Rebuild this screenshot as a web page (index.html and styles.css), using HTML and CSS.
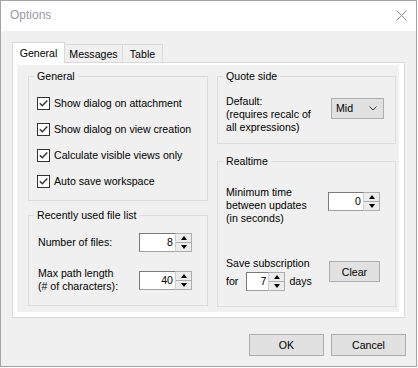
FILE: index.html
```html
<!DOCTYPE html>
<html lang="en">
<head>
  <meta charset="UTF-8">
  <title>Options</title>
  <link rel="stylesheet" href="styles.css">
</head>
<body>
  <div class="window">
    <div class="titlebar">
      <span class="title">Options</span>
      <svg class="close" width="11" height="11" viewBox="0 0 11 11">
        <path d="M0.5 0.5 L10.5 10.5 M10.5 0.5 L0.5 10.5" stroke="#8a8a8a" stroke-width="1" fill="none"/>
      </svg>
    </div>

    <div class="dialog">
      <div class="tabs">
        <div class="tab active">General</div>
        <div class="tab">Messages</div>
        <div class="tab">Table</div>
      </div>

      <div class="panel">
        <div class="page">
          <div class="col">
            <fieldset class="group">
              <legend>General</legend>
              <div class="group-body checks">
                <label class="check"><span class="box"><svg width="11" height="11" viewBox="0 0 11 11"><path d="M1.8 5.2 L4.3 7.8 L9.3 2.4" stroke="#333" stroke-width="1.4" fill="none"/></svg></span>Show dialog on attachment</label>
                <label class="check"><span class="box"><svg width="11" height="11" viewBox="0 0 11 11"><path d="M1.8 5.2 L4.3 7.8 L9.3 2.4" stroke="#333" stroke-width="1.4" fill="none"/></svg></span>Show dialog on view creation</label>
                <label class="check"><span class="box"><svg width="11" height="11" viewBox="0 0 11 11"><path d="M1.8 5.2 L4.3 7.8 L9.3 2.4" stroke="#333" stroke-width="1.4" fill="none"/></svg></span>Calculate visible views only</label>
                <label class="check"><span class="box"><svg width="11" height="11" viewBox="0 0 11 11"><path d="M1.8 5.2 L4.3 7.8 L9.3 2.4" stroke="#333" stroke-width="1.4" fill="none"/></svg></span>Auto save workspace</label>
              </div>
            </fieldset>

            <fieldset class="group recent">
              <legend>Recently used file list</legend>
              <div class="group-body files">
                <div class="field-row">
                  <span class="field-label">Number of files:</span>
                  <div class="spin">
                    <span class="spin-value">8</span>
                    <span class="spin-btns"><span class="spin-up"></span><span class="spin-down"></span></span>
                  </div>
                </div>
                <div class="field-row">
                  <span class="field-label">Max path length<br>(# of characters):</span>
                  <div class="spin">
                    <span class="spin-value">40</span>
                    <span class="spin-btns"><span class="spin-up"></span><span class="spin-down"></span></span>
                  </div>
                </div>
              </div>
            </fieldset>
          </div>

          <div class="col">
            <fieldset class="group">
              <legend>Quote side</legend>
              <div class="group-body quote">
                <span class="quote-text">Default:<br>(requires recalc of<br>all expressions)</span>
                <div class="select">
                  <span>Mid</span>
                  <svg width="8" height="5" viewBox="0 0 8 5"><path d="M0.5 0.5 L4 4 L7.5 0.5" stroke="#333" stroke-width="1" fill="none"/></svg>
                </div>
              </div>
            </fieldset>

            <fieldset class="group realtime">
              <legend>Realtime</legend>
              <div class="group-body">
                <div class="rt-row">
                  <span class="rt-text">Minimum time<br>between updates<br>(in seconds)</span>
                  <div class="spin spin-wide">
                    <span class="spin-value">0</span>
                    <span class="spin-btns"><span class="spin-up"></span><span class="spin-down"></span></span>
                  </div>
                </div>
                <div class="rt-row save">
                  <div class="save-text">
                    <span>Save subscription</span>
                    <div class="days">
                      <span>for</span>
                      <div class="spin spin-small">
                        <span class="spin-value">7</span>
                        <span class="spin-btns"><span class="spin-up"></span><span class="spin-down"></span></span>
                      </div>
                      <span>days</span>
                    </div>
                  </div>
                  <button class="btn clear">Clear</button>
                </div>
              </div>
            </fieldset>
          </div>
        </div>
      </div>

      <div class="buttons">
        <button class="btn">OK</button>
        <button class="btn">Cancel</button>
      </div>
    </div>
  </div>
</body>
</html>
```

FILE: styles.css
```css
* {
  margin: 0;
  padding: 0;
  box-sizing: border-box;
}

html, body {
  background: #fff;
}

body {
  font-family: "Liberation Sans", Arial, sans-serif;
  font-size: 10.6px;
  line-height: 13px;
  color: #000;
}

.window {
  width: 417px;
  height: 367px;
  border: 1px solid #a3a3a3;
  background: #f0f0f0;
  display: flex;
  flex-direction: column;
}

.titlebar {
  height: 30px;
  background: #fff;
  display: flex;
  align-items: center;
  justify-content: space-between;
  padding: 0 9px 1px 9px;
}

.title {
  font-size: 12px;
  color: #9a9aa2;
}

.dialog {
  flex: 1;
  padding: 11px 10px 0 11px;
}

/* tabs */
.tabs {
  display: flex;
  align-items: flex-end;
  height: 21px;
  margin-bottom: -1px;
  position: relative;
  z-index: 1;
}

.tab {
  height: 18px;
  margin-bottom: 1px;
  margin-left: -1px;
  border: 1px solid #d9d9d9;
  border-bottom: 0;
  background: #f0f0f0;
  display: flex;
  align-items: center;
  justify-content: center;
  padding-top: 1px;
}

.tab:nth-child(2) { width: 59px; }
.tab:nth-child(3) { width: 41px; }

.tab.active {
  width: 53px;
  height: 21px;
  margin: 0;
  background: #fff;
  position: relative;
  z-index: 1;
  padding-top: 0;
}

.panel {
  width: 393px;
  height: 256px;
  border: 1px solid #d9d9d9;
  background: #fff;
  padding: 2px 5px 5px 4px;
}

.page {
  height: 100%;
  background: #f0f0f0;
  padding: 5px 0 0 11px;
  display: grid;
  grid-template-columns: 180px 179px;
  column-gap: 9px;
  align-items: start;
}

/* group boxes */
.group {
  border: 1px solid #dcdcdc;
  min-width: 0;
}

.group legend {
  margin-left: 5px;
  padding: 0 3px;
  line-height: 13px;
}

.recent { margin-top: 8px; }
.realtime { margin-top: 11px; }

.checks {
  padding: 7px 0 6px 8px;
}

.check {
  height: 26px;
  display: flex;
  align-items: center;
  gap: 4px;
  white-space: nowrap;
}

.box {
  width: 13px;
  height: 13px;
  border: 1px solid #333;
  background: #fff;
  display: flex;
}

.files {
  padding: 11px 0 12px 9px;
  display: flex;
  flex-direction: column;
  gap: 15px;
}

.field-row {
  display: flex;
  align-items: center;
  min-height: 19px;
}

.field-label {
  width: 101px;
}

/* spin boxes */
.spin {
  width: 53px;
  height: 19px;
  display: flex;
}

.spin-wide { width: 52px; }
.spin-small { width: 39px; }

.spin-value {
  flex: 1;
  background: #fff;
  border: 1px solid;
  border-color: #7a7a7a #cfcfcf #a0a0a0 #7a7a7a;
  text-align: right;
  padding: 2px 2px 0 0;
}

.spin-btns {
  width: 16px;
  border: 1px solid #adadad;
  border-left: 0;
  display: flex;
  flex-direction: column;
  background: #ececec;
}

.spin-up, .spin-down {
  flex: 1;
  display: flex;
  align-items: center;
  justify-content: center;
}

.spin-up {
  border-bottom: 1px solid #adadad;
}

.spin-up::after {
  content: "";
  border-left: 3px solid transparent;
  border-right: 3px solid transparent;
  border-bottom: 4px solid #000;
}

.spin-down::after {
  content: "";
  border-left: 3px solid transparent;
  border-right: 3px solid transparent;
  border-top: 4px solid #000;
}

/* quote side */
.quote {
  padding: 12px 0 9px 8px;
  display: flex;
  align-items: flex-start;
}

.quote-text {
  width: 105px;
  white-space: nowrap;
}

.select {
  width: 53px;
  height: 21px;
  margin-top: 3px;
  background: #e1e1e1;
  border: 1px solid #adadad;
  display: flex;
  align-items: center;
  justify-content: space-between;
  padding: 0 6px 0 4px;
}

/* realtime */
.realtime .group-body {
  padding: 18px 0 15px 8px;
}

.rt-row {
  display: flex;
  align-items: flex-start;
}

.rt-text {
  width: 102px;
  white-space: nowrap;
}

.rt-row .spin-wide {
  margin-top: 6px;
}

.rt-row.save {
  margin-top: 32px;
}

.save-text {
  width: 103px;
  display: flex;
  flex-direction: column;
}

.days {
  display: flex;
  align-items: center;
  height: 20px;
  margin-top: 1px;
}

.days .spin {
  margin: 0 4px 0 8px;
}

.btn {
  font-family: inherit;
  font-size: 10.6px;
  color: #000;
  background: #e1e1e1;
  border: 1px solid #adadad;
  width: 75px;
  height: 22px;
}

.btn.clear {
  width: 51px;
  height: 21px;
  margin-top: 4px;
}

.buttons {
  display: flex;
  justify-content: flex-end;
  gap: 7px;
  margin-top: 16px;
}
```
